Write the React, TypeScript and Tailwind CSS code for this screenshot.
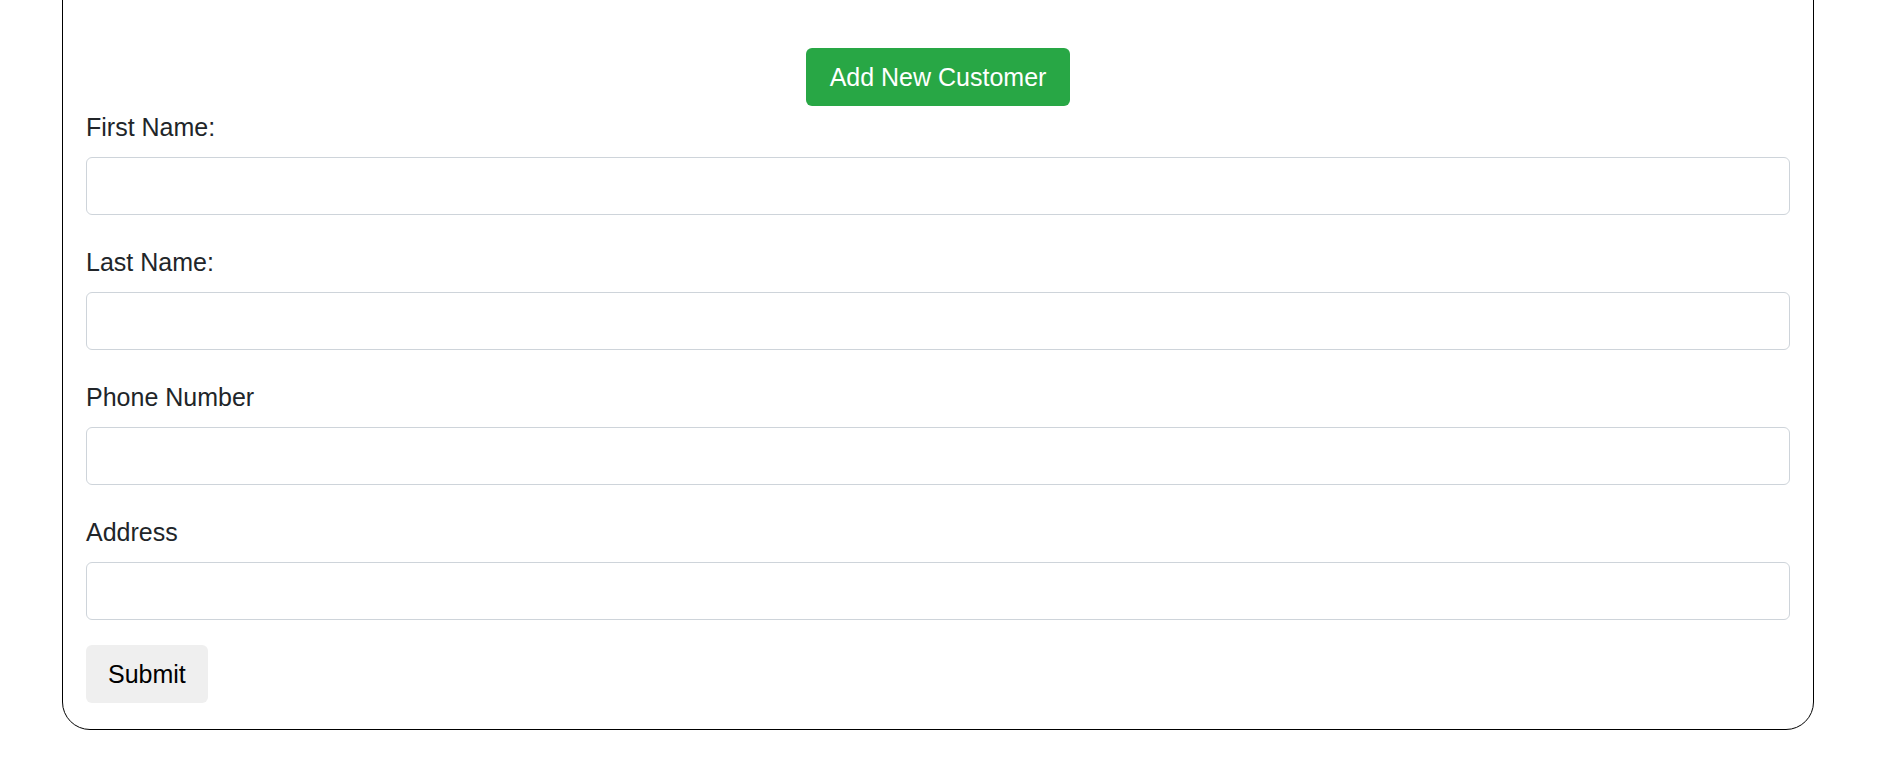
import { useState } from 'react';

const fields = [
  { id: 'firstName', label: 'First Name:' },
  { id: 'lastName', label: 'Last Name:' },
  { id: 'phone', label: 'Phone Number' },
  { id: 'address', label: 'Address' },
];

export default function App() {
  const [values, setValues] = useState<Record<string, string>>({});

  return (
    <div className="min-h-screen overflow-hidden bg-white font-['Liberation_Sans',Arial,sans-serif] text-[25px] leading-[36px] text-[#212529]">
      <div className="-mt-[30px] ml-[62px] mr-[68px] rounded-[28px] border border-black px-[23px] pb-[26px] pt-[77px]">
        <div className="flex justify-center">
          <button className="h-[58px] rounded-[6px] bg-[#28a745] px-[24px] text-white">Add New Customer</button>
        </div>
        <form className="mt-[3px]" onSubmit={(e) => e.preventDefault()}>
          <div className="flex flex-col gap-[29px]">
            {fields.map((f) => (
              <div key={f.id}>
                <label htmlFor={f.id} className="mb-[12px] block">
                  {f.label}
                </label>
                <input
                  id={f.id}
                  value={values[f.id] ?? ''}
                  onChange={(e) => setValues((v) => ({ ...v, [f.id]: e.target.value }))}
                  className="block h-[58px] w-full rounded-[6px] border border-[#ced4da] bg-white px-[18px] outline-none"
                />
              </div>
            ))}
          </div>
          <button type="submit" className="mt-[25px] h-[58px] rounded-[6px] bg-[#efefef] px-[22px] text-black">
            Submit
          </button>
        </form>
      </div>
    </div>
  );
}
